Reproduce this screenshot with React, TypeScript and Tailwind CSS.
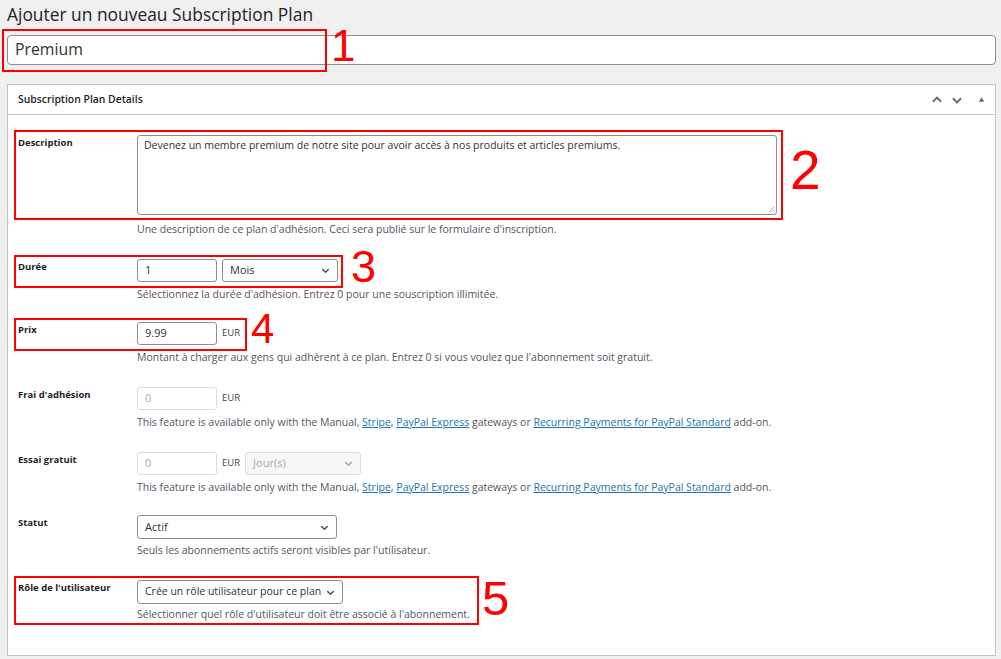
import { ReactNode } from "react";

const font = { fontFamily: '"Open Sans", "Noto Sans", sans-serif' };

function Chevron({ className = "" }: { className?: string }) {
  return (
    <svg viewBox="0 0 12 12" className={className} fill="none" stroke="currentColor" strokeWidth="1.6">
      <path d="M2.5 4.5 6 8l3.5-3.5" />
    </svg>
  );
}

// red annotation box + number drawn over the form
function Annot({ n, box, num }: { n: string; box: string; num: string }) {
  return (
    <>
      <span className={`pointer-events-none absolute border-2 border-[#ff0000] ${box}`} />
      <span className={`pointer-events-none absolute leading-[0.72] text-[#ff0000] ${num}`} style={{ fontFamily: '"Liberation Sans", sans-serif' }}>
        {n}
      </span>
    </>
  );
}

function Help({ children, className = "mt-[5px]" }: { children: ReactNode; className?: string }) {
  return <p className={`whitespace-nowrap text-[10.5px] leading-[14px] text-[#50575e] ${className}`}>{children}</p>;
}

function Row({ label, children, className = "" }: { label: string; children: ReactNode; className?: string }) {
  return (
    <div className={`relative flex ${className}`}>
      <div className="w-[129px] shrink-0 pl-[10px] text-[9.5px] leading-[15px] font-bold text-[#1d2327]">{label}</div>
      <div className="flex-1">{children}</div>
    </div>
  );
}

function Select({
  value,
  w,
  h = "h-[23px]",
  size = "text-[11px]",
  disabled = false,
}: {
  value: string;
  w: string;
  h?: string;
  size?: string;
  disabled?: boolean;
}) {
  return (
    <div
      className={`flex items-center justify-between rounded-[3px] border pl-[7px] pr-[6px] whitespace-nowrap ${size} ${h} ${w} ${
        disabled ? "border-[#dcdcde] bg-[#f6f7f7] text-[#a7aaad]" : "border-[#8c8f94] bg-white text-[#2c3338]"
      }`}
    >
      <span>{value}</span>
      <Chevron className={`h-[11px] w-[11px] shrink-0 ${disabled ? "text-[#a7aaad]" : "text-[#50575e]"}`} />
    </div>
  );
}

function Input({ value, disabled = false }: { value: string; disabled?: boolean }) {
  return (
    <div
      className={`flex h-[23px] w-[80px] items-center rounded-[3px] border pl-[7px] text-[11px] ${
        disabled ? "border-[#dcdcde] bg-white text-[#a7aaad]" : "border-[#8c8f94] bg-white text-[#2c3338]"
      }`}
    >
      {value}
    </div>
  );
}

function Eur() {
  return <span className="text-[9.5px] text-[#3c434a]">EUR</span>;
}

function GatewayHelp() {
  return (
    <Help>
      This feature is available only with the Manual, <a className="text-[#2271b1] underline">Stripe</a>,{" "}
      <a className="text-[#2271b1] underline">PayPal Express</a> gateways or{" "}
      <a className="text-[#2271b1] underline">Recurring Payments for PayPal Standard</a> add-on.
    </Help>
  );
}

export default function App() {
  return (
    <div className="h-[659px] w-[1001px] overflow-hidden bg-[#f0f0f1] text-[#3c434a]" style={font}>
      <h1 className="pl-[7px] pt-[1px] text-[17.4px] leading-[26px] text-[#1d2327]">Ajouter un nouveau Subscription Plan</h1>

      <div className="relative mt-[8px] pl-[7px] pr-[5px]">
        <div className="flex h-[30px] items-center rounded-[4px] border border-[#8c8f94] bg-white pl-[7px] text-[15.8px] text-[#2c3338]">
          Premium
        </div>
        <Annot n="1" box="left-[2px] top-[-6px] h-[43px] w-[325px]" num="left-[331px] top-[-5px] text-[44px]" />
      </div>

      <div className="ml-[7px] mr-[5px] mt-[19px] h-[572px] border border-[#c3c4c7] bg-white">
        <div className="flex h-[30px] items-center justify-between border-b border-[#c3c4c7] pl-[10px] pr-[10px]">
          <span className="text-[10.4px] font-semibold text-[#1d2327]">Subscription Plan Details</span>
          <div className="flex items-center gap-[6px] text-[#646970]">
            <Chevron className="h-[14px] w-[14px] rotate-180" />
            <Chevron className="h-[14px] w-[14px]" />
            <svg viewBox="0 0 8 8" className="ml-[8px] h-[7px] w-[7px] text-[#646970]" fill="currentColor">
              <path d="M4 1.5 7 6.5H1z" />
            </svg>
          </div>
        </div>

        <Row label="Description" className="mt-[20px]">
          <div className="relative h-[80px] w-[640px] rounded-[3px] border border-[#8c8f94] px-[6px] pt-[1px] text-[10.5px] leading-[16px] text-[#2c3338]">
            Devenez un membre premium de notre site pour avoir accès à nos produits et articles premiums.
            <svg viewBox="0 0 8 8" className="absolute bottom-[1px] right-[1px] h-[7px] w-[7px]" stroke="#8c8f94" strokeWidth="0.9">
              <path d="M1 7 7 1M4 7 7 4" />
            </svg>
          </div>
          <Help className="mt-[7px]">Une description de ce plan d'adhésion. Ceci sera publié sur le formulaire d'inscription.</Help>
          <Annot n="2" box="left-[6px] top-[-5px] h-[90px] w-[769px]" num="left-[782px] top-[16px] text-[55px]" />
        </Row>

        <Row label="Durée" className="mt-[23px]">
          <div className="flex gap-[5px]">
            <Input value="1" />
            <Select value="Mois" w="w-[116px]" />
          </div>
          <Help>Sélectionnez la durée d'adhésion. Entrez 0 pour une souscription illimitée.</Help>
          <Annot n="3" box="left-[6px] top-[-4px] h-[33px] w-[329px]" num="left-[343px] top-[-8px] text-[45px]" />
        </Row>

        <Row label="Prix" className="mt-[21px]">
          <div className="flex items-center gap-[5px]">
            <Input value="9.99" />
            <Eur />
          </div>
          <Help>Montant à charger aux gens qui adhèrent à ce plan. Entrez 0 si vous voulez que l'abonnement soit gratuit.</Help>
          <Annot n="4" box="left-[6px] top-[-4px] h-[33px] w-[233px]" num="left-[243px] top-[-8px] text-[42px]" />
        </Row>

        <Row label="Frai d'adhésion" className="mt-[23px]">
          <div className="flex items-center gap-[5px]">
            <Input value="0" disabled />
            <Eur />
          </div>
          <GatewayHelp />
        </Row>

        <Row label="Essai gratuit" className="mt-[23px]">
          <div className="flex items-center gap-[5px]">
            <Input value="0" disabled />
            <Eur />
            <Select value="Jour(s)" w="w-[116px]" disabled />
          </div>
          <GatewayHelp />
        </Row>

        <Row label="Statut" className="mt-[21px]">
          <Select value="Actif" w="w-[200px]" h="h-[24px]" />
          <Help className="mt-[4px]">Seuls les abonnements actifs seront visibles par l'utilisateur.</Help>
        </Row>

        <Row label="Rôle de l'utilisateur" className="mt-[23px]">
          <Select value="Crée un rôle utilisateur pour ce plan" w="w-[206px]" h="h-[24px]" size="text-[10.5px]" />
          <Help className="mt-[3px]">Sélectionner quel rôle d'utilisateur doit être associé à l'abonnement.</Help>
          <Annot n="5" box="left-[6px] top-[-4px] h-[49px] w-[465px]" num="left-[474px] top-[1px] text-[49px]" />
        </Row>
      </div>
    </div>
  );
}
